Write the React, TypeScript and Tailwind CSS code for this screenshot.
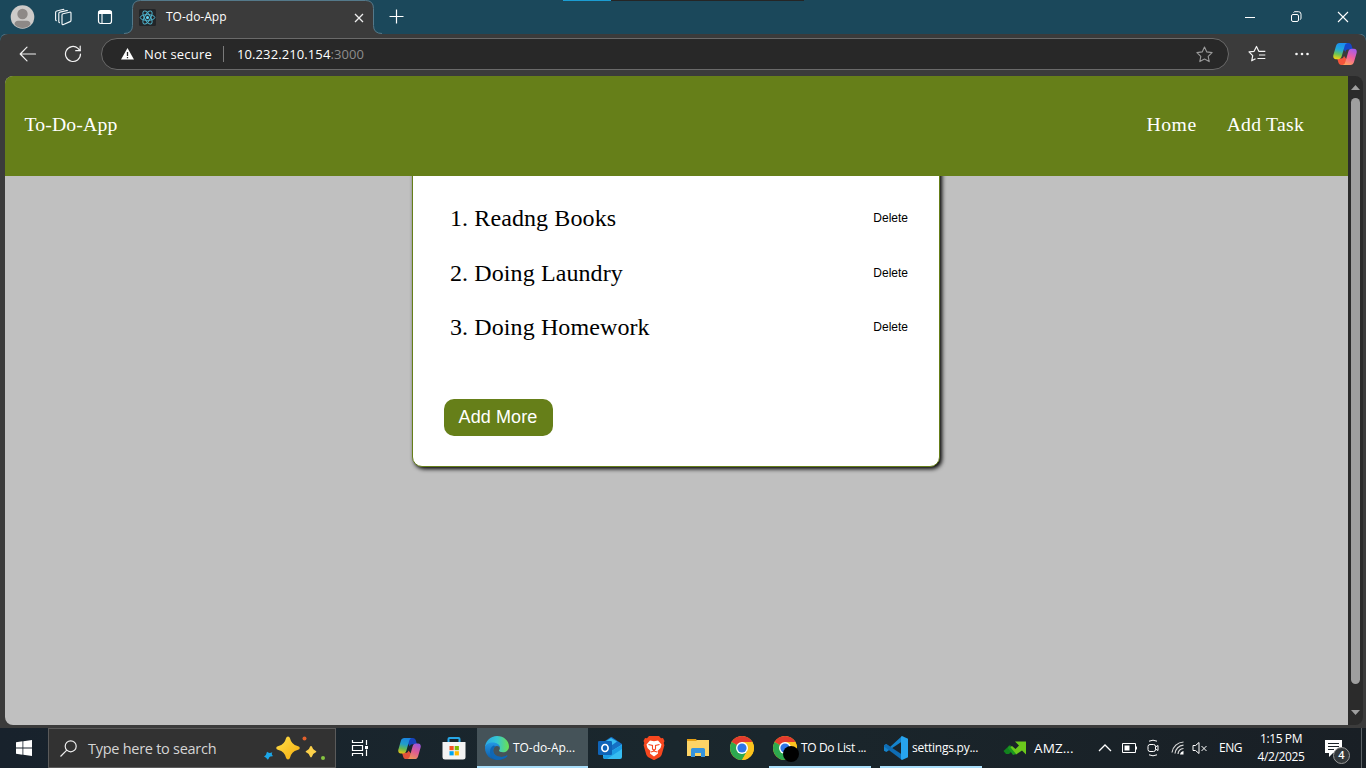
import React from "react";

function Copilot({ size, id, dim }: { size: number; id: string; dim?: boolean }) {
  return (
    <svg width={size} height={size} viewBox="0 0 24 24" opacity={dim ? 0.92 : 1}>
      <defs>
        <linearGradient id={id + "a"} x1="0.5" y1="0" x2="0.3" y2="1">
          <stop offset="0" stopColor="#1b8df0" />
          <stop offset="0.4" stopColor="#22a8d8" />
          <stop offset="0.7" stopColor="#6cc455" />
          <stop offset="1" stopColor="#f5d313" />
        </linearGradient>
        <linearGradient id={id + "b"} x1="0.7" y1="0" x2="0.3" y2="1">
          <stop offset="0" stopColor="#a65bea" />
          <stop offset="0.5" stopColor="#f0609c" />
          <stop offset="1" stopColor="#ffa05c" />
        </linearGradient>
      </defs>
      <path d="M11 1h4.500c1.800 0 2.600 1 3.100 2.500l1.200 4h-5c-1.500 0-2 .8-2.500 2.500L10 6z" fill="#1646c8" />
      <path d="M13 23H8.500c-1.800 0-2.600-1-3.100-2.500l-1.200-4h4c1.500 0 2.300-.8 2.800-2.500l3 4z" fill="#f4553b" />
      <path d="M6.500 1h8c-1.700.3-2.400 1.500-2.900 3.200L8.800 14c-.6 2-1.600 3.200-3.800 3.200H3C.8 17.200-.2 15.300.4 13L3 4C3.600 2 4.800 1 6.500 1z" fill={`url(#${id}a)`} />
      <path d="M17.500 23h-8c1.700-.3 2.400-1.500 2.900-3.200L15.200 10c.6-2 1.600-3.200 3.800-3.200h2c2.200 0 3.200 1.900 2.600 4.200L21 20c-.6 2-1.800 3-3.500 3z" fill={`url(#${id}b)`} />
    </svg>
  );
}

function ChromeLogo() {
  return (
    <svg width="24" height="24" viewBox="0 0 24 24">
      <circle cx="12" cy="12" r="12" fill="#fbc116" />
      <path d="M12 12 1.610 6A12 12 0 0 1 22.390 6H12z" fill="#e33b2e" />
      <path d="M12 12 1.610 6A12 12 0 0 0 12 24L17.200 15z" fill="#2da94f" />
      <path d="M22.390 6H12l5.200 9L12 24A12 12 0 0 0 22.390 6z" fill="#fcc31e" />
      <circle cx="12" cy="12" r="6" fill="#fff" />
      <circle cx="12" cy="12" r="4.600" fill="#2f76e8" />
    </svg>
  );
}

function TitleBar() {
  return (
    <div className="relative flex h-[34px] items-center bg-[#1b485b] text-white">
      <div className="absolute left-[563px] top-0 flex h-px w-[241px] bg-[#252525]">
        <div className="h-px w-12 bg-[#1b9dd3]" />
      </div>
      <div className="flex w-[132px] items-center">
        <svg className="ml-[10px]" width="25" height="24" viewBox="0 0 24 24">
          <defs>
            <clipPath id="av"><circle cx="12" cy="12" r="11" /></clipPath>
          </defs>
          <circle cx="12" cy="12" r="11.800" fill="#cdcbc9" />
          <g clipPath="url(#av)" fill="#8d8987">
            <circle cx="12" cy="9" r="5.200" />
            <path d="M4 24v-5c0-2 1.500-3.300 3.500-3.300h9c2 0 3.500 1.300 3.500 3.300v5z" />
          </g>
        </svg>
        <svg className="ml-[19px]" width="18" height="18" viewBox="0 0 18 18" fill="none" stroke="#f2f6f8" strokeWidth="1.150" strokeLinejoin="round">
          <path d="M9 5.700 15.500 4.200q1.500-.3 1.500 1.100v6.900q0 1-.9 1.400l-6.600 2.900q-1.500.6-1.500-1V7q0-1.100 1-1.300z" />
          <path d="M6 14.700q-1.200 0-1.200-1.300V5.600q0-1.200 1.200-1.500l6.500-1.500q1-.2 1.300.5" />
          <path d="M2.800 12.700q-1.200 0-1.200-1.300V4.500q0-1.200 1.200-1.500l6-1.500q1-.2 1.300.3" />
        </svg>
        <svg className="ml-[25px]" width="16" height="16" viewBox="0 0 16 16" fill="none" stroke="#fff">
          <rect x="1.500" y="1.500" width="13" height="13" rx="2.200" strokeWidth="1.200" />
          <path d="M1.500 3.500h13" strokeWidth="3" />
          <path d="M5 5v9.500" strokeWidth="1.100" />
        </svg>
      </div>
      <div className="relative z-10 flex h-[34px] w-[242px] items-center">
        <svg className="absolute -left-2 top-0" width="258" height="34" viewBox="0 0 258 34">
          <path d="M0 34v-.5q8.500 0 8.500-8V8.500q0-8 8-8h225q8 0 8 8v17q0 8 8.500 8v.5z" fill="#3b3b3b" />
          <path d="M0 33.500q8.500 0 8.500-8V8.500q0-8 8-8h225q8 0 8 8v17q0 8 8.500 8" fill="none" stroke="#54798a" />
        </svg>
        <svg className="relative ml-[7px] shrink-0" width="17" height="17" viewBox="0 0 17 17" fill="none" stroke="#4fb3cc">
          <rect width="17" height="17" rx="1.500" fill="#222528" stroke="none" />
          <g strokeWidth="1">
            <ellipse cx="8.500" cy="8.500" rx="7.300" ry="2.900" />
            <ellipse cx="8.500" cy="8.500" rx="7.300" ry="2.900" transform="rotate(60 8.500 8.500)" />
            <ellipse cx="8.500" cy="8.500" rx="7.300" ry="2.900" transform="rotate(120 8.500 8.500)" />
          </g>
          <circle cx="8.500" cy="8.500" r="1.500" fill="#61dafb" stroke="none" />
        </svg>
        <span className="relative ml-[10px] w-[186px] whitespace-nowrap text-[12px]">TO-do-App</span>
        <svg className="relative shrink-0" width="14" height="14" viewBox="0 0 14 14" stroke="#eee" strokeWidth="1.300">
          <path d="M3 4l8 8M11 4l-8 8" />
        </svg>
      </div>
      <svg className="ml-[14px]" width="16" height="16" viewBox="0 0 16 16" stroke="#fff" strokeWidth="1.200">
        <path d="M1.500 7.500h14M8.500 .5v14" />
      </svg>
      <div className="ml-auto flex items-center">
        <svg width="12" height="12" viewBox="0 0 12 12" stroke="#fff"><path d="M1 6.500h10" /></svg>
        <svg className="ml-[34px]" width="12" height="12" viewBox="0 0 12 12" fill="none" stroke="#fff">
          <rect x="1.500" y="3.500" width="7" height="7" rx="1.500" />
          <path d="M3.500 1.500q.5-.8 1.500-.8H8.500q2.500 0 2.500 2.500V7q0 1-.8 1.700" />
        </svg>
        <svg className="ml-[35px] mr-[17px]" width="12" height="12" viewBox="0 0 12 12" stroke="#fff" strokeWidth="1.100">
          <path d="M1 1l10 10M11 1L1 11" />
        </svg>
      </div>
    </div>
  );
}

function Toolbar() {
  return (
    <div className="bg-[#1b485b]">
      <div className="-mt-px flex h-[43px] items-center rounded-t-[8px] border-t border-[#54798a] bg-[#3b3b3b] pb-[3px] text-white">
        <svg className="ml-[19px]" width="18" height="18" viewBox="0 0 18 18" fill="none" stroke="#f2f2f2" strokeWidth="1.200" strokeLinecap="round" strokeLinejoin="round">
          <path d="M16.500 9H1.500M8 2.200 1.200 9 8 15.800" />
        </svg>
        <svg className="ml-[27px]" width="18" height="18" viewBox="0 0 18 18" fill="none" stroke="#f2f2f2" strokeWidth="1.200" strokeLinecap="round">
          <path d="M16.500 9a7.500 7.500 0 1 1-2.500-5.600L16 5.500" />
          <path d="M16.200 1.200v4.500h-4.500" />
        </svg>
        <div className="mt-[1px] ml-[19px] flex h-8 w-[1128px] items-center rounded-full border border-[#6a6a6a] bg-[#282828]">
          <svg className="ml-[19px]" width="13" height="12" viewBox="0 0 13 12">
            <path d="M6.500 0 13 11.500H0z" fill="#fff" />
            <path d="M6.500 4v4M6.500 9v1.300" stroke="#282828" strokeWidth="1.300" />
          </svg>
          <span className="ml-[10px] mt-px w-[79px] whitespace-nowrap text-[13px] tracking-[0.2px]">Not secure</span>
          <div className="h-4 w-px bg-[#7a7a7a]" />
          <span className="ml-[13px] mt-px whitespace-nowrap text-[13px] tracking-[0.1px]">10.232.210.154<span className="text-[#8d8d8d]">:3000</span></span>
          <svg className="ml-auto mr-[15px]" width="17" height="17" viewBox="0 0 17 17" fill="none" stroke="#9a9a9a" strokeWidth="1.100" strokeLinejoin="round">
            <path d="M8.500 1l2.300 4.900 5.300.7-3.900 3.700 1 5.300-4.700-2.600-4.700 2.600 1-5.300L.9 6.600l5.300-.7z" />
          </svg>
        </div>
        <svg className="ml-[19px]" width="18" height="18" viewBox="0 0 18 18" fill="none" stroke="#f5f5f5" strokeWidth="1.200" strokeLinejoin="round">
          <path d="M7.500 13.700 3.700 15.800l1-5.200L1 6.900l5.100-.6L8.500 1.500l2.300 4.800h6.500M11 10h6.300M9.500 13.500h7.800" />
        </svg>
        <svg className="ml-[28px]" width="16" height="4" viewBox="0 0 16 4" fill="#f5f5f5">
          <circle cx="2.500" cy="2" r="1.300" /><circle cx="8" cy="2" r="1.300" /><circle cx="13.500" cy="2" r="1.300" />
        </svg>
        <div className="ml-[23px]"><Copilot size={24} id="c1" /></div>
      </div>
    </div>
  );
}

const tasks = ["Readng Books", "Doing Laundry", "Doing Homework"];

function Page() {
  return (
    <div className="flex h-[652px] bg-[#3b3b3b] pb-[3px] pl-[5px]">
      <div className="flex h-[649px] w-[1343px] flex-col overflow-hidden rounded-l-[8px] bg-[#c0c0c0] font-['Liberation_Serif',serif]">
        <header className="relative z-10 flex h-[100px] shrink-0 items-center justify-between bg-[#667f19] pb-[2px] pl-[19.500px] pr-[44px] text-[19.700px] tracking-[0.15px] text-white">
          <span>To-Do-App</span>
          <nav className="flex gap-[30px] tracking-[0.25px]"><span className="tracking-[0.500px]">Home</span><span>Add Task</span></nav>
        </header>
        <main className="-mt-5 ml-[407px] h-[311px] w-[528px] rounded-[10px] border border-[#667f19] bg-white pt-[34px] shadow-[2px_2px_4px_#000]">
          <ol>
            {tasks.map((t, i) => (
              <li key={t} className="flex h-[54.500px] items-center justify-between pl-[37px] pr-[31px] text-[24px] tracking-[0.1px] text-black">
                <span>{i + 1}. {t}</span>
                <button className="font-['Liberation_Sans',sans-serif] text-[12px] tracking-normal">Delete</button>
              </li>
            ))}
          </ol>
          <button className="ml-[31px] mt-[44px] h-[37px] w-[109px] rounded-[10px] bg-[#667f19] pr-px font-['Liberation_Sans',sans-serif] text-[18px] tracking-[0.1px] text-white">Add More</button>
        </main>
      </div>
      <div className="flex h-[649px] w-[15px] flex-col items-center justify-between rounded-r-[8px] bg-[#2b2b2b] pb-[10px] pt-[9px]">
        <svg width="9" height="5" viewBox="0 0 9 5"><path d="M4.500 0 9 5H0z" fill="#9f9f9f" /></svg>
        <div className="mb-auto mt-[8px] h-[586px] w-[9px] rounded-full bg-[#9f9f9f]" />
        <svg width="9" height="5" viewBox="0 0 9 5"><path d="M4.500 5 9 0H0z" fill="#9f9f9f" /></svg>
      </div>
    </div>
  );
}

function Store() {
  return (
    <svg width="24" height="24" viewBox="0 0 24 24">
      <path d="M6.500 7V3q0-1 1-1h9q1 0 1 1v4" fill="none" stroke="#27a7e7" strokeWidth="2" />
      <path d="M.5 6h23v15q0 2.500-2.500 2.500H3Q.5 23.500.5 21z" fill="#f3f3f3" />
      <path d="M7.500 10h4.200v4.200H7.500z" fill="#f25022" /><path d="M12.700 10h4.200v4.200h-4.200z" fill="#7fba00" />
      <path d="M7.500 15.200h4.200v4.200H7.500z" fill="#00a4ef" /><path d="M12.700 15.200h4.200v4.200h-4.200z" fill="#ffb900" />
    </svg>
  );
}

function EdgeLogo() {
  return (
    <svg width="24" height="24" viewBox="0 0 24 24">
      <defs>
        <linearGradient id="eg" x1="0" y1="0.4" x2="1" y2="0.4"><stop stopColor="#2aa7e4" /><stop offset="0.5" stopColor="#35c6d4" /><stop offset="1" stopColor="#6be14f" /></linearGradient>
        <linearGradient id="eb" x1="0" y1="0" x2="0" y2="1"><stop stopColor="#2497e4" /><stop offset="1" stopColor="#0c59a4" /></linearGradient>
      </defs>
      <path d="M0 12C0 5 5.500 0 12 0c7 0 12 5 12 10.500 0 3.500-2.800 5.800-6 5.800-2.800 0-4-.9-4-1.700 0-.6.9-1 .9-2.700C14.900 9.500 12 7 8 7c-4.500 0-8 3-8 5z" fill="url(#eg)" />
      <path d="M0 12c0-3 3.500-5.500 7.500-5.500 4.500 0 7.400 2.500 7.400 5.400-.5-1.300-1.600-2-2.900-2-2 0-3.800 2-3.800 4.700 0 4 3.800 6.400 8.300 6.400 2.500 0 4.300-.9 5.200-1.400.6-.3 1 .2.700.7C20.200 22.800 16.500 24 12 24 5.500 24 0 19 0 12z" fill="url(#eb)" />
      <path d="M8.500 9.600C6 11 5 13.500 5 16c0 4 3 7.200 7 8 4 0 7.600-1 10-3.700.5-.6 0-1-.5-.7-.9.500-2.700 1.400-5 1.400-4.500 0-8.300-2.400-8.300-6.400 0-2 1-3.700 2.300-4.400z" fill="#0f67b5" />
    </svg>
  );
}

function Taskbar() {
  return (
    <footer className="flex h-10 items-stretch bg-linear-to-r from-[#18222c] via-[#1a272d] to-[#191f25] text-white">
      <div className="flex w-12 items-center justify-center">
        <svg width="16" height="16" viewBox="0 0 16 16" fill="#fff"><path d="M0 2.200 6.500 1.300v6.200H0zM7.300 1.200 16 0v7.500H7.300zM0 8.400h6.500v6.300L0 13.800zM7.300 8.400H16V16l-8.700-1.200z" /></svg>
      </div>
      <div className="flex w-[288px] items-center border border-[#5a5a5a] bg-[#323232]">
        <svg className="ml-[11px]" width="17" height="17" viewBox="0 0 17 17" fill="none" stroke="#eee" strokeWidth="1.200"><circle cx="10.700" cy="6.300" r="5.500" /><path d="M6.800 10.200.5 16.500" /></svg>
        <span className="ml-[11px] mt-px w-[175px] whitespace-nowrap text-[14.500px] tracking-[-0.27px] text-[#d5d5d5]">Type here to search</span>
        <svg className="mt-px" width="64" height="28" viewBox="0 0 64 28">
          <defs><linearGradient id="sp" x1="0" y1="0" x2="1" y2="1"><stop stopColor="#ffe04c" /><stop offset="1" stopColor="#f5ac0c" /></linearGradient></defs>
          <path d="M25 1.500q1.500 0 2 1.700 1.400 6.200 7.500 7.800 2.300.7 2.300 2t-2.300 2q-6.100 1.600-7.500 7.800-.5 1.700-2 1.700t-2-1.700q-1.400-6.200-7.500-7.800-2.300-.7-2.300-2t2.300-2q6.100-1.600 7.500-7.800.5-1.700 2-1.700z" fill="url(#sp)" />
          <path d="M48 11q.8 0 1 .8.800 3.200 3.400 4 .9.200.9.900t-.9.900q-2.600.8-3.400 4-.2.800-1 .8t-1-.8q-.8-3.200-3.400-4-.9-.2-.9-.9t.9-.9q2.600-.8 3.400-4 .2-.8 1-.8z" fill="#fcd04a" />
          <path d="M4 16.800q2 2 5.300.5-.8 1.500-.3 2.500 1 .9.600 1.500-2.800.2-3.300 1-.6 2-1.500 2.400-1.600-2.400-3.800-3.200 2.500-1.200 3-4.700z" fill="#1ba6e8" />
          <circle cx="41.500" cy="3.500" r="2" fill="#e4602b" /><circle cx="60" cy="23" r="2" fill="#86c440" />
        </svg>
      </div>
      <div className="flex w-12 items-center justify-center">
        <svg width="18" height="18" viewBox="0 0 18 18" fill="none" stroke="#fff" strokeWidth="1.200">
          <path d="M1.500 1v2.500h10V1M1.500 17v-2.500h10V17M1.500 6.500h10v5h-10zM15.500 1v5M15.500 10.500V17" /><path d="M14 7h3v3h-3z" fill="#fff" stroke="none" />
        </svg>
      </div>
      <div className="flex w-[49px] items-center justify-center pl-px"><Copilot size={23} id="c2" dim /></div>
      <div className="flex w-11 items-center justify-center pr-[2px]"><Store /></div>
      <div className="flex w-[111px] items-center border-b-2 border-[#a9defa] bg-[#455359] pl-2 pt-[2px]">
        <EdgeLogo /><span className="ml-1 whitespace-nowrap text-[12px] tracking-[-0.05px]">TO-do-Ap...</span>
      </div>
      <div className="flex w-11 items-center justify-center">
        <svg width="24" height="24" viewBox="0 0 24 24">
          <path d="M4 7 12.500 1.200q.8-.4 1.600 0L24 8v4L12 20 4 14z" fill="#1670c4" />
          <path d="M4 7.500 13 2l6 3.500L10 12z" fill="#38bdf3" />
          <path d="M24 8.500V21q0 2-2 2H7q-2 0-2-2v-3l6-1.500z" fill="#36bdf2" />
          <path d="M5 20l19-11v4L9 23H7q-2 0-2-3z" fill="#1c9de5" />
          <rect y="5" width="14" height="14" rx="1.200" fill="#0f64b8" /><ellipse cx="7" cy="12" rx="3.100" ry="3.500" fill="none" stroke="#fff" strokeWidth="1.700" />
        </svg>
      </div>
      <div className="flex w-11 items-center justify-center">
        <svg width="22" height="24" viewBox="0 0 22 24">
          <path d="M6 0h10l2 2.300 2-.2 1.500 3-.8 2 .7 2.100-2.800 9.800-1.500 2L11 24.200 4.900 21l-1.500-2L.6 9.200l.7-2.100-.8-2L2 2.100l2 .2z" fill="#f7471f" />
          <path d="M7 4.500l4 .8 4-.8 3.500 4-1 3.500-3 3 .5 2.500-4 3-4-3 .5-2.500-3-3-1-3.500z" fill="#fff" />
          <path d="M5.500 8.500l4 1v3.500l1.500 1.500 1.500-1.500V9.500l4-1M8 16l3-1 3 1" fill="none" stroke="#f7471f" strokeWidth="1.100" />
        </svg>
      </div>
      <div className="flex w-11 items-center justify-center">
        <svg width="22" height="20" viewBox="0 0 22 20"><path d="M0 1h9l2 3H0z" fill="#e5a014" /><path d="M0 3h9l1-1h12v16H0z" fill="#fdd466" /><path d="M4 19v-7.500q0-1.500 1.500-1.500h11q1.500 0 1.500 1.500V19h-4v-4H8v4z" fill="#3694dd" /></svg>
      </div>
      <div className="flex w-11 items-center justify-center"><ChromeLogo /></div>
      <div className="ml-[5px] flex w-[102px] items-center border-b-2 border-[#a9defa] pl-1 pt-[2px]">
        <div className="relative"><ChromeLogo /><div className="absolute left-[10px] top-[10px] size-4 rounded-full bg-black" /></div>
        <span className="ml-1 whitespace-nowrap text-[12px] tracking-[-0.35px]">TO Do List ...</span>
      </div>
      <div className="ml-[9px] flex w-[102px] items-center border-b-2 border-[#a9defa] pl-1 pt-[2px]">
        <svg width="24" height="24" viewBox="0 0 24 24"><path d="M18 0 6 11 2.300 8 0 9.200v5.600L2.300 16 18 5.500z" fill="#1583cb" /><path d="M0 9.200 2.300 8 18 18.500V24L0 10.500z" fill="#0f6db4" /><path d="M18 0l6 2.800v18.400L18 24l-1-1V1z" fill="#27a4ee" /></svg>
        <span className="ml-1 whitespace-nowrap text-[12px] tracking-[-0.25px]">settings.py...</span>
      </div>
      <div className="ml-[21px] flex w-[95px] items-center">
        <svg width="24" height="16" viewBox="0 0 24 16"><path d="M.5 11 7 5l4 4-5 5H3z" fill="#12821e" /><path d="M6 8l3-2 3.500 3L16 5.500l-4-4h11v13l-4-4-6 4z" fill="#6bc91c" /><path d="M6 5.500 13 14l-3 1-5-7z" fill="#1a9620" /></svg>
        <span className="ml-[7px] whitespace-nowrap text-[13.500px] tracking-[0.1px]">AMZ...</span>
      </div>
      <div className="flex items-center">
        <svg width="14" height="10" viewBox="0 0 14 10" fill="none" stroke="#fff" strokeWidth="1.300"><path d="M1 8l6-6 6 6" /></svg>
        <svg className="ml-[10px]" width="16" height="10" viewBox="0 0 16 10" fill="none" stroke="#fff"><path d="M.5.5h13v9H.5zM14.500 3.500v3" /><path d="M2.500 2.500h5v5h-5z" fill="#fff" stroke="none" /></svg>
        <svg className="ml-[9px]" width="13" height="18" viewBox="0 0 13 18" fill="none" stroke="#fff"><rect x="1" y="5.500" width="7.500" height="7" rx="2" /><path d="M8.500 8l2.500-1.500v5L8.500 10M2 2.200Q6 .2 10 2.200M2 15.800q4 2 8 0" /></svg>
        <svg className="ml-[11px]" width="14" height="14" viewBox="0 0 14 14" fill="none" stroke="#d8d8d8" strokeWidth="1.200"><path d="M1 11.500A12 12 0 0 1 12.500 1M4 12.500A9 9 0 0 1 12.500 4.200M7 13a6 6 0 0 1 5.500-5.500" /><path d="M9 13.500q.5-3 3.500-3.500v3.500z" fill="#fff" stroke="none" /></svg>
        <svg className="ml-[7px]" width="16" height="14" viewBox="0 0 16 14" fill="none" stroke="#fff"><path d="M1 4.500h2.500L7 1.500v11l-3.500-3H1zM9.500 5l5 5M14.500 5l-5 5" /></svg>
        <span className="ml-[11px] w-[24px] whitespace-nowrap text-[12px] tracking-[-0.5px]">ENG</span>
      </div>
      <div className="ml-[10px] flex w-[56px] flex-col items-center justify-center whitespace-nowrap text-[12px] leading-[18px] tracking-[-0.4px]">
        <span>1:15 PM</span><span>4/2/2025</span>
      </div>
      <div className="relative ml-[16px] mt-3 w-[36px]">
        <svg width="17" height="17" viewBox="0 0 17 17"><path d="M0 0h17v13h-9l-4 4v-4H0z" fill="#fff" /><path d="M3 3.500h11M3 6.500h11M3 9.500h6" stroke="#1b2228" /></svg>
        <div className="absolute left-[8px] top-[7px] flex size-[17px] items-center justify-center rounded-full border border-[#999] bg-[#33383b] text-[11px] font-semibold">4</div>
      </div>
      <div className="w-px bg-[#5c6266]" />
    </footer>
  );
}

export default function App() {
  return (
    <div className="h-[768px] w-[1366px] overflow-hidden bg-[#3b3b3b] font-['Open_Sans','Noto_Sans',sans-serif]">
      <TitleBar />
      <Toolbar />
      <Page />
      <Taskbar />
    </div>
  );
}
